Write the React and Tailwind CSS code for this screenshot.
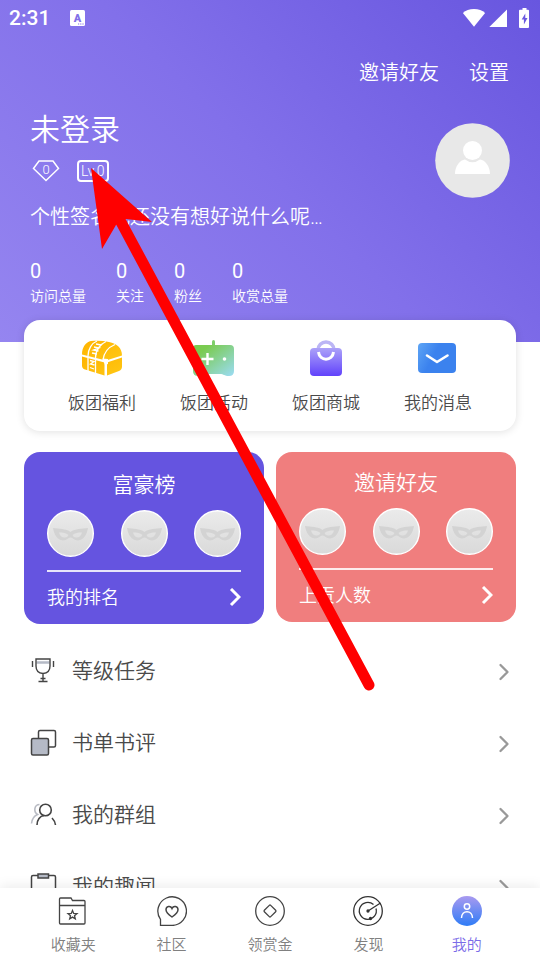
import React from 'react';
import { ChevronRight } from 'lucide-react';

const stats = [
  { label: '访问总量', value: 0 },
  { label: '关注', value: 0 },
  { label: '粉丝', value: 0 },
  { label: '收赏总量', value: 0 },
];

const shortcuts = [
  { label: '饭团福利', Icon: ChestIcon },
  { label: '饭团活动', Icon: GamepadIcon },
  { label: '饭团商城', Icon: BagIcon },
  { label: '我的消息', Icon: MessageIcon },
];

const menu = [
  { label: '等级任务', Icon: TrophyIcon },
  { label: '书单书评', Icon: BooksIcon },
  { label: '我的群组', Icon: GroupIcon },
  { label: '我的趣闻', Icon: ClipboardIcon },
];

const tabs = [
  { label: '收藏夹', Icon: FolderIcon },
  { label: '社区', Icon: CommunityIcon },
  { label: '领赏金', Icon: CoinIcon },
  { label: '发现', Icon: RadarIcon },
  { label: '我的', Icon: MeIcon, active: true },
];

function App() {
  return (
    <div className="relative flex h-screen flex-col overflow-hidden bg-white font-['Roboto','Noto_Sans_CJK_SC',sans-serif] font-[350]">
      <main className="min-h-0 flex-1 overflow-hidden">
        <ProfileHeader />
        <Shortcuts />

        {/* Ranking panels */}
        <section className="mx-6 mt-[21px] grid grid-cols-2 items-start gap-3">
          <RankPanel title="富豪榜" footer="我的排名" className="bg-[#6554e0] pt-[18px]" />
          <RankPanel title="邀请好友" footer="上贡人数" className="bg-[#f07e7e] pt-4" />
        </section>

        {/* Menu list */}
        <ul className="mt-3">
          {menu.map(({ label, Icon }) => (
            <li key={label}>
              <a href="#" className="flex h-18 items-center pr-[22px] pl-7 text-[21px] text-[#4a4a4a]">
                <Icon />
                <span className="ml-3.5 flex-1">{label}</span>
                <ChevronRight size={28} strokeWidth={2} className="text-[#999999]" />
              </a>
            </li>
          ))}
        </ul>
      </main>

      <TabBar />
      <Pointer />
    </div>
  );
}

function ProfileHeader() {
  return (
    <header className="bg-[linear-gradient(45deg,#9585f0_0%,#8270ea_50%,#6856df_100%)] pb-[34px] text-white">
      <StatusBar />

      <nav className="flex justify-end gap-[30px] pt-[21px] pr-[31px] text-xl leading-8">
        <a href="#">邀请好友</a>
        <a href="#">设置</a>
      </nav>

      <div className="flex items-end justify-between pt-[21px] pr-[30px] pl-[30px]">
        <div className="pb-4">
          <h1 className="text-[30px] leading-10">未登录</h1>
          <div className="mt-2.5 flex items-center gap-[15px]">
            <svg className="h-[22px] w-8" viewBox="0 0 32 22" fill="none" stroke="white" strokeWidth="1.5">
              <path d="M9 1h14l5.5 7.500L16 20.500 3.500 8.500z" />
              <text x="16" y="13.500" textAnchor="middle" fontSize="13" fill="white" stroke="none">0</text>
            </svg>
            <span className="flex h-[22px] items-center rounded-sm border-2 border-white px-0.5 text-sm leading-4">
              Lv.0
            </span>
          </div>
        </div>
        <Avatar />
      </div>

      <p className="mt-[3px] pl-[30px] text-xl leading-8">个性签名我还没有想好说什么呢…</p>

      <dl className="mt-6.5 flex gap-[30px] pl-[30px]">
        {stats.map((s) => (
          <div key={s.label} className="flex flex-col-reverse">
            <dt className="mt-px text-sm leading-6">{s.label}</dt>
            <dd className="text-xl leading-6 font-normal">{s.value}</dd>
          </div>
        ))}
      </dl>
    </header>
  );
}

function StatusBar() {
  return (
    <div className="flex h-9 items-center pr-2.5 pl-[9px]">
      <span className="text-[21px] leading-9 font-medium">2:31</span>
      <svg className="ml-5 h-4 w-[15px]" viewBox="0 0 15 16">
        <rect width="15" height="16" rx="1.500" fill="white" />
        <text x="7.500" y="11.500" textAnchor="middle" fontSize="11" fontWeight="900" fill="#8270e8">A</text>
        <path d="M8 14h1.200M10.200 14h1.200M12.400 14h1.200" stroke="#8270e8" strokeWidth="1.200" />
      </svg>
      <svg className="ml-auto h-5 w-[68px]" viewBox="0 0 68 20" fill="white">
        <path d="M12 18.7.9 4.9C3.5 2.4 7.600 1 12 1s8.500 1.400 11.100 3.900z" />
        <path d="M45 1.500v17.500H27.300z" />
        <path d="M60.500 0h4v1.700h1.500q1 0 1 1V19q0 1-1 1h-8q-1 0-1-1V2.700q0-1 1-1h2.500z" />
        <path d="M63.300 5.500 59.700 11.500h2.200v5l3.600-6.500h-2.200z" fill="#6b59e0" />
      </svg>
    </div>
  );
}

function Avatar() {
  return (
    <svg className="size-[75px]" viewBox="0 0 75 75">
      <circle cx="37.500" cy="37.500" r="37.300" fill="#e8e8e8" />
      <path d="M20 51c0-8 5-14 10-14.500q7.500 5.500 15 0C50 37 55 43 55 51z" fill="white" />
      <circle cx="37.500" cy="27.500" r="9.500" fill="white" />
    </svg>
  );
}

function Shortcuts() {
  return (
    <section className="relative mx-6 -mt-[22px] grid grid-cols-4 rounded-2xl bg-white px-[22px] pt-4 pb-3.5 shadow-[0_1px_8px_rgba(0,0,0,0.12)]">
      {shortcuts.map(({ label, Icon }) => (
        <a key={label} href="#" className="flex flex-col items-center text-[17px] leading-7 text-[#4a4a4a]">
          <Icon />
          <span className="mt-[9px]">{label}</span>
        </a>
      ))}
    </section>
  );
}

function RankPanel({ title, footer, className }) {
  return (
    <article className={`rounded-2xl px-[23px] pb-2.5 text-white ${className}`}>
      <h2 className="text-center text-[21px] leading-[30px]">{title}</h2>
      <div className="mt-2.5 flex justify-between border-b-2 border-white/85 pb-[13px]">
        <Mask />
        <Mask />
        <Mask />
      </div>
      <a href="#" className="flex items-center justify-between pt-2.5 text-lg leading-8">
        {footer}
        <svg className="h-5 w-3" viewBox="0 0 12 20" fill="none" stroke="white" strokeWidth="3">
          <path d="m2 1 8 8-8 8" />
        </svg>
      </a>
    </article>
  );
}

function Mask() {
  return (
    <svg className="size-[47px]" viewBox="0 0 47 47">
      <defs>
        <linearGradient id="mask-bg" x2="0" y2="1">
          <stop stopColor="#ebebeb" />
          <stop offset="1" stopColor="#d9d9d9" />
        </linearGradient>
      </defs>
      <circle cx="23.500" cy="23.500" r="22.800" fill="url(#mask-bg)" stroke="white" strokeWidth="1.400" />
      <path
        fillRule="evenodd"
        fill="#d3d3d3"
        d="M6 18c6 1 13 .5 17.500 4C28 18.500 35 19 41 18c-1 6-4 12-10 12.500-4 0-5-3-7.500-3s-3.500 3-7.500 3C10 30 7 24 6 18zm6 4.500c1 4 3.500 5.500 6 5 2 0 3-1.500 3.500-2.500-2.500-2-5.500-2.500-9.500-2.500zm23 0c-4 0-7 .5-9.500 2.500.5 1 1.500 2.500 3.500 2.500 2.500.5 5-1 6-5z"
      />
    </svg>
  );
}

function TabBar() {
  return (
    <nav className="relative grid h-18 shrink-0 grid-cols-5 bg-white px-6 pt-2 shadow-[0_-2px_12px_rgba(0,0,0,0.08)]">
      {tabs.map(({ label, Icon, active }) => (
        <a
          key={label}
          href="#"
          className={`flex flex-col items-center text-[15px] leading-6 ${active ? 'text-[#7b6ce8]' : 'text-[#808080]'}`}
        >
          <Icon />
          <span className="mt-[7px]">{label}</span>
        </a>
      ))}
    </nav>
  );
}

/* Shortcut icons */

function ChestIcon() {
  return (
    <svg className="h-11 w-11" viewBox="0 0 44 44">
      <defs>
        <linearGradient id="chest" x2="1" y2="1">
          <stop stopColor="#ffb300" />
          <stop offset="1" stopColor="#ffc814" />
        </linearGradient>
      </defs>
      <g fill="url(#chest)">
        <path d="M2 18.500C2 11 6 6 11 5c6-.6 12-.5 18 1 8 1.500 13 6 13 13.500L26 24.500z" />
        <path d="M2 20.500 24.500 26.500v13L5 33.500q-3-1-3-4zM27 26.500 42 21.500v9q0 3-3 4.500L27 39.500z" />
      </g>
      <g fill="none" stroke="white" strokeWidth="1.300">
        <path d="M8 20c0-7 4-13 9-15M15.500 22c0-8 5-14 10.500-16.500M23 24c1-8 6-13 12-15.500" />
        <path d="M8 22v13M15.500 24v14" />
        <path d="m16 8 5 1M14 11l5 1-5.500 2 5 1M12 17l5 1M10 24.500l4 1-3.500 2.500 4 1M10 31.500l4 1.500" />
      </g>
      <path d="m22.500 22.500 5.500.5v5l-3 1z" fill="white" />
    </svg>
  );
}

function GamepadIcon() {
  return (
    <svg className="h-11 w-11" viewBox="0 0 44 44">
      <defs>
        <linearGradient id="pad" x2="1" y2="1">
          <stop offset=".2" stopColor="#7acb50" />
          <stop offset="1" stopColor="#9bdcf5" />
        </linearGradient>
      </defs>
      <path d="M20 10V5.500q0-1.500 1.500-1.500T23 5.500V10" fill="#7fce6b" />
      <path d="M4 9h34q4 0 4 4v22q0 5-5 5c-5 0-5-2-9-2H14c-4 0-4 2-8 2q-5 0-5-5V13q0-4 3-4z" fill="url(#pad)" />
      <path d="M15.500 17v12M9.500 23h12" stroke="white" strokeWidth="2.400" />
      <circle cx="32.500" cy="23" r="1.800" fill="white" />
    </svg>
  );
}

function BagIcon() {
  return (
    <svg className="h-11 w-11" viewBox="0 0 44 44">
      <defs>
        <linearGradient id="bag" gradientUnits="userSpaceOnUse" x1="0" y1="4" x2="0" y2="40">
          <stop stopColor="#c1bdf8" />
          <stop offset="1" stopColor="#6142fb" />
        </linearGradient>
      </defs>
      <path d="M14 14a8 8 0 0 1 16 0" fill="none" stroke="#bbb5f5" strokeWidth="3.500" />
      <rect x="6" y="12" width="32" height="28" rx="4" fill="url(#bag)" />
      <path d="M14.500 16c1 9.500 14 9.500 15 0" fill="none" stroke="white" strokeWidth="3" />
    </svg>
  );
}

function MessageIcon() {
  return (
    <svg className="h-11 w-11" viewBox="0 0 44 44">
      <defs>
        <linearGradient id="msg" x2="1" y2=".4">
          <stop stopColor="#5ea5f5" />
          <stop offset=".5" stopColor="#3b82ee" />
        </linearGradient>
      </defs>
      <rect x="2" y="7" width="38" height="30" rx="4" fill="url(#msg)" />
      <path d="m11 19.500 10 6.500 10.500-6.500" fill="none" stroke="white" strokeWidth="2.600" strokeLinecap="round" strokeLinejoin="round" />
    </svg>
  );
}

/* Menu icons */

function TrophyIcon() {
  return (
    <svg className="size-[30px]" viewBox="0 0 30 30" fill="none" stroke="#444" strokeWidth="1.400">
      <path d="M8.500 5.500h13" stroke="#b5bac6" strokeWidth="2.500" />
      <path d="M8 2h14v7q0 7-7 7.500Q8 16 8 9zM15 16.500V24M12.500 21.500h5M10.500 24.500h9M4.500 4v6M25.500 4v6" />
    </svg>
  );
}

function BooksIcon() {
  return (
    <svg className="size-[30px]" viewBox="0 0 30 30" fill="none" stroke="#444" strokeWidth="1.500">
      <rect x="10.500" y="1.500" width="17" height="16.500" rx="1.500" />
      <rect x="3.500" y="9.500" width="17" height="16.500" rx="1.500" fill="#b5bac6" />
    </svg>
  );
}

function GroupIcon() {
  return (
    <svg className="size-[30px]" viewBox="0 0 30 30" fill="none" stroke="#444" strokeWidth="1.600">
      <path d="M11.500 3.500c-5 0-6.500 7-2 10C6 15 4 18 3.500 22.500" stroke="#b9bcc4" />
      <circle cx="17.500" cy="9" r="5.800" />
      <path d="M9 24c0-5 3-9 7-9.500M24 17q3 3 3.500 7" />
    </svg>
  );
}

function ClipboardIcon() {
  return (
    <svg className="size-[30px]" viewBox="0 0 30 30" fill="none" stroke="#444" strokeWidth="1.500">
      <rect x="3.500" y="2.500" width="24" height="25" rx="1.500" />
      <rect x="10" y="1" width="10.500" height="4" fill="#b5bac6" />
    </svg>
  );
}

/* Tab icons */

function FolderIcon() {
  return (
    <svg className="size-[30px]" viewBox="0 0 30 30" fill="none" stroke="#444" strokeWidth="1.300">
      <path d="M1.500 9.500V3q0-1 1-1h10.500l1.500 2.500h11.500q1 0 1 1V27q0 1-1 1H2.500q-1 0-1-1V9.500H27" />
      <path d="m14.500 14.500 1.200 2.900 3.300.2-2.500 2.100.8 3.200-2.800-1.800-2.800 1.800.8-3.200-2.500-2.100 3.300-.2z" />
    </svg>
  );
}

function CommunityIcon() {
  return (
    <svg className="size-[30px]" viewBox="0 0 30 30" fill="none" stroke="#444" strokeWidth="1.300">
      <path d="M15 29.400H3.500v-6A14.300 14.300 0 1 1 15 29.400z" />
      <path d="M15 21c-3-2-6-4.300-6-7.200 0-3.800 4.700-4.400 6-1.300 1.300-3.100 6-2.500 6 1.300 0 2.900-3 5.200-6 7.200z" strokeWidth="1.500" />
    </svg>
  );
}

function CoinIcon() {
  return (
    <svg className="size-[30px]" viewBox="0 0 30 30" fill="none" stroke="#444" strokeWidth="1.300">
      <circle cx="15" cy="15" r="14.300" />
      <rect x="10.500" y="10.500" width="9" height="9" rx="1" transform="rotate(45 15 15)" />
    </svg>
  );
}

function RadarIcon() {
  return (
    <svg className="size-[30px]" viewBox="0 0 30 30" fill="none" stroke="#333" strokeWidth="1.300">
      <circle cx="15" cy="15" r="14.300" />
      <path d="M20.500 8.500a8.500 8.500 0 1 0 2.500 4M15 15 27.500 7" />
      <circle cx="15" cy="15" r="1" fill="#333" />
      <circle cx="17.500" cy="22.500" r="1" fill="#333" />
    </svg>
  );
}

function MeIcon() {
  return (
    <svg className="size-[30px]" viewBox="0 0 30 30" fill="none" stroke="white" strokeWidth="1.500">
      <defs>
        <linearGradient id="me" x2="0" y2="1">
          <stop stopColor="#a99af0" />
          <stop offset="1" stopColor="#2f7cf6" />
        </linearGradient>
      </defs>
      <circle cx="15" cy="15" r="15" fill="url(#me)" stroke="none" />
      <circle cx="15" cy="10.500" r="2.700" />
      <path d="M9.500 22c0-8.500 11-8.500 11 0" />
    </svg>
  );
}

// Red arrow laid over the page, pointing at the level badge
function Pointer() {
  return (
    <svg className="pointer-events-none absolute top-0 left-0" width="540" height="960" fill="#ff0000">
      <path d="M91 168 152 222 126 219 116 225 102 249z" />
      <path d="M121 222 369 685" stroke="#ff0000" strokeWidth="11" strokeLinecap="round" />
    </svg>
  );
}

export default App;
